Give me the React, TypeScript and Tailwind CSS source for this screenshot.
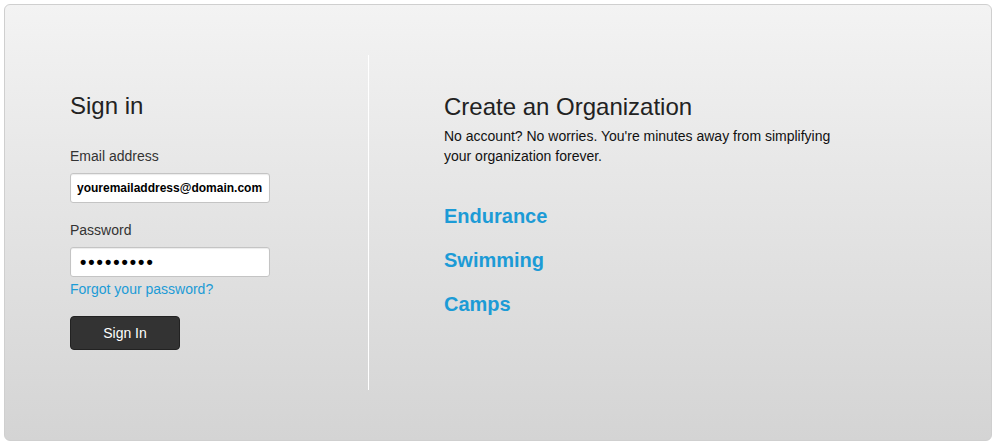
export default function App() {
  const orgs = ["Endurance", "Swimming", "Camps"];

  return (
    <div className="min-h-screen bg-white pt-1 pl-1 pr-[3px] font-['Liberation_Sans',Arial,sans-serif]">
      <div className="flex h-[437px] rounded-md border border-[#cfcfcf] bg-linear-to-b from-[#f3f3f3] to-[#d4d4d4] py-[50px]">
        {/* sign in */}
        <div className="w-[363px] pl-[65px] pt-[38px]">
          <h2 className="text-[24px] leading-[26px] text-[#222]">Sign in</h2>

          <label className="mt-[27px] block text-sm leading-5 text-[#333]">Email address</label>
          <input
            type="text"
            readOnly
            value="youremailaddress@domain.com"
            className="mt-[7px] block h-[30px] w-[200px] rounded-[3px] border border-[#c4c4c4] bg-white px-[6px] text-[12px] font-bold text-black shadow-[inset_0_1px_1px_rgba(0,0,0,0.08)] outline-none"
          />

          <label className="mt-[17px] block text-sm leading-5 text-[#333]">Password</label>
          <input
            type="password"
            readOnly
            value="password1"
            className="mt-[7px] block h-[30px] w-[200px] rounded-[3px] border border-[#c4c4c4] bg-white px-[9px] text-[18px] font-bold tracking-[2px] text-black shadow-[inset_0_1px_1px_rgba(0,0,0,0.08)] outline-none"
          />
          <a href="#" className="mt-[2px] block text-sm leading-5 text-[#1c9bd6]">
            Forgot your password?
          </a>

          <button className="mt-[17px] h-[34px] w-[110px] rounded-[4px] border border-[#222] bg-[#333] text-sm text-white">
            Sign In
          </button>
        </div>

        <div className="w-px bg-white" />

        {/* create org */}
        <div className="pl-[75px] pt-[39px]">
          <h2 className="text-[24px] leading-[26px] text-[#222]">Create an Organization</h2>
          <p className="mt-[6px] w-[400px] text-sm leading-5 text-[#111]">
            No account? No worries. You're minutes away from simplifying your organization forever.
          </p>
          <div className="mt-[38px] flex flex-col gap-5">
            {orgs.map((o) => (
              <a key={o} href="#" className="text-[20px] font-bold leading-6 text-[#1c9bd6]">
                {o}
              </a>
            ))}
          </div>
        </div>
      </div>
    </div>
  );
}
